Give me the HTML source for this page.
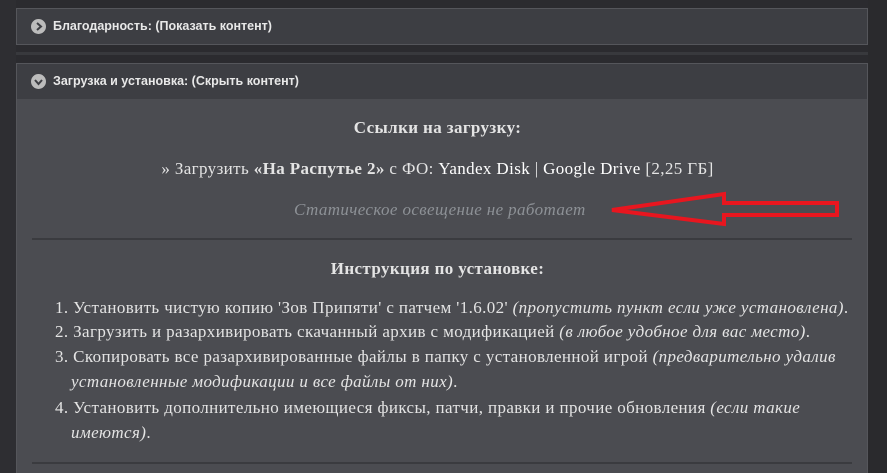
<!DOCTYPE html>
<html><head><meta charset="utf-8"><style>
*{margin:0;padding:0;box-sizing:border-box}
body{width:887px;height:473px;overflow:hidden;background:#2b2b2f;position:relative;font-family:"Liberation Serif","DejaVu Serif",serif;color:#e4e4e4}
.strip{position:absolute;left:0;top:0;width:16px;height:473px;background:#2e2e32}
.rstrip{position:absolute;left:868px;top:0;width:19px;height:473px;background:#2a2a2d}
.hdr{position:absolute;left:16px;width:852px;background:#3d3e43;border:1px solid #55565b;font-family:"Liberation Sans",sans-serif;font-weight:bold;font-size:12.5px;color:#e8e8e8}
.hdr span{position:absolute;left:36px;top:10px}
.ic{position:absolute;left:14px;top:10px;width:15px;height:15px;border-radius:50%;background:#bcbcbc}
.content{position:absolute;left:16px;top:99px;width:852px;height:374px;background:#4b4c51;border-left:1px solid #55565b;border-right:1px solid #55565b}
.t{position:absolute;white-space:nowrap;font-size:17px;letter-spacing:0.38px}
.c{left:0;width:887px;text-align:center}
.hr{position:absolute;left:32px;width:820px;height:2px;background:#3a3b3f}
i{font-style:italic}
.g{color:#8d9196}
</style></head><body>
<div class="strip"></div><div class="rstrip"></div>
<div class="hdr" style="top:8px;height:37px"><div class="ic"><svg width="15" height="15"><path d="M6 4l4 3.5L6 11" stroke="#3d3e43" stroke-width="2" fill="none"/></svg></div><span>Благодарность: (Показать контент)</span></div>
<div style="position:absolute;left:16px;top:52px;width:852px;height:3px;background:#38393d"></div>
<div class="hdr" style="top:63px;height:37px"><div class="ic"><svg width="15" height="15"><path d="M4 6l3.5 4L11 6" stroke="#3d3e43" stroke-width="2" fill="none"/></svg></div><span>Загрузка и установка: (Скрыть контент)</span></div>
<div class="content"></div>
<div class="t c" style="top:118px;font-weight:bold;left:-6px">Ссылки на загрузку:</div>
<div class="t c" style="top:159px;left:-6px">» Загрузить <b>«На Распутье 2»</b> с ФО: <span style="color:#fff">Yandex Disk</span> | <span style="color:#fff">Google Drive</span> [2,25 ГБ]</div>
<div class="t g" style="top:200px;left:294px"><i>Статическое освещение не работает</i></div>
<svg style="position:absolute;left:0;top:0" width="887" height="473"><polygon points="612,210 724,194 724,203 837,203 837,215 724,215 724,224" fill="none" stroke="#e8161f" stroke-width="4"/></svg>
<div class="hr" style="top:238px"></div>
<div class="t c" style="top:259px;font-weight:bold;left:-6px">Инструкция по установке:</div>
<div class="t" style="top:298px;left:55px">1. Установить чистую копию 'Зов Припяти' с патчем '1.6.02' <i>(пропустить пункт если уже установлена)</i>.</div>
<div class="t" style="top:322px;left:55px">2. Загрузить и разархивировать скачанный архив с модификацией <i>(в любое удобное для вас место)</i>.</div>
<div class="t" style="top:347px;left:55px">3. Скопировать все разархивированные файлы в папку с установленной игрой <i>(предварительно удалив</i></div>
<div class="t" style="top:372px;left:71px"><i>установленные модификации и все файлы от них)</i>.</div>
<div class="t" style="top:398px;left:55px">4. Установить дополнительно имеющиеся фиксы, патчи, правки и прочие обновления <i>(если такие</i></div>
<div class="t" style="top:423px;left:71px"><i>имеются)</i>.</div>
<div class="hr" style="top:462px"></div>
</body></html>
